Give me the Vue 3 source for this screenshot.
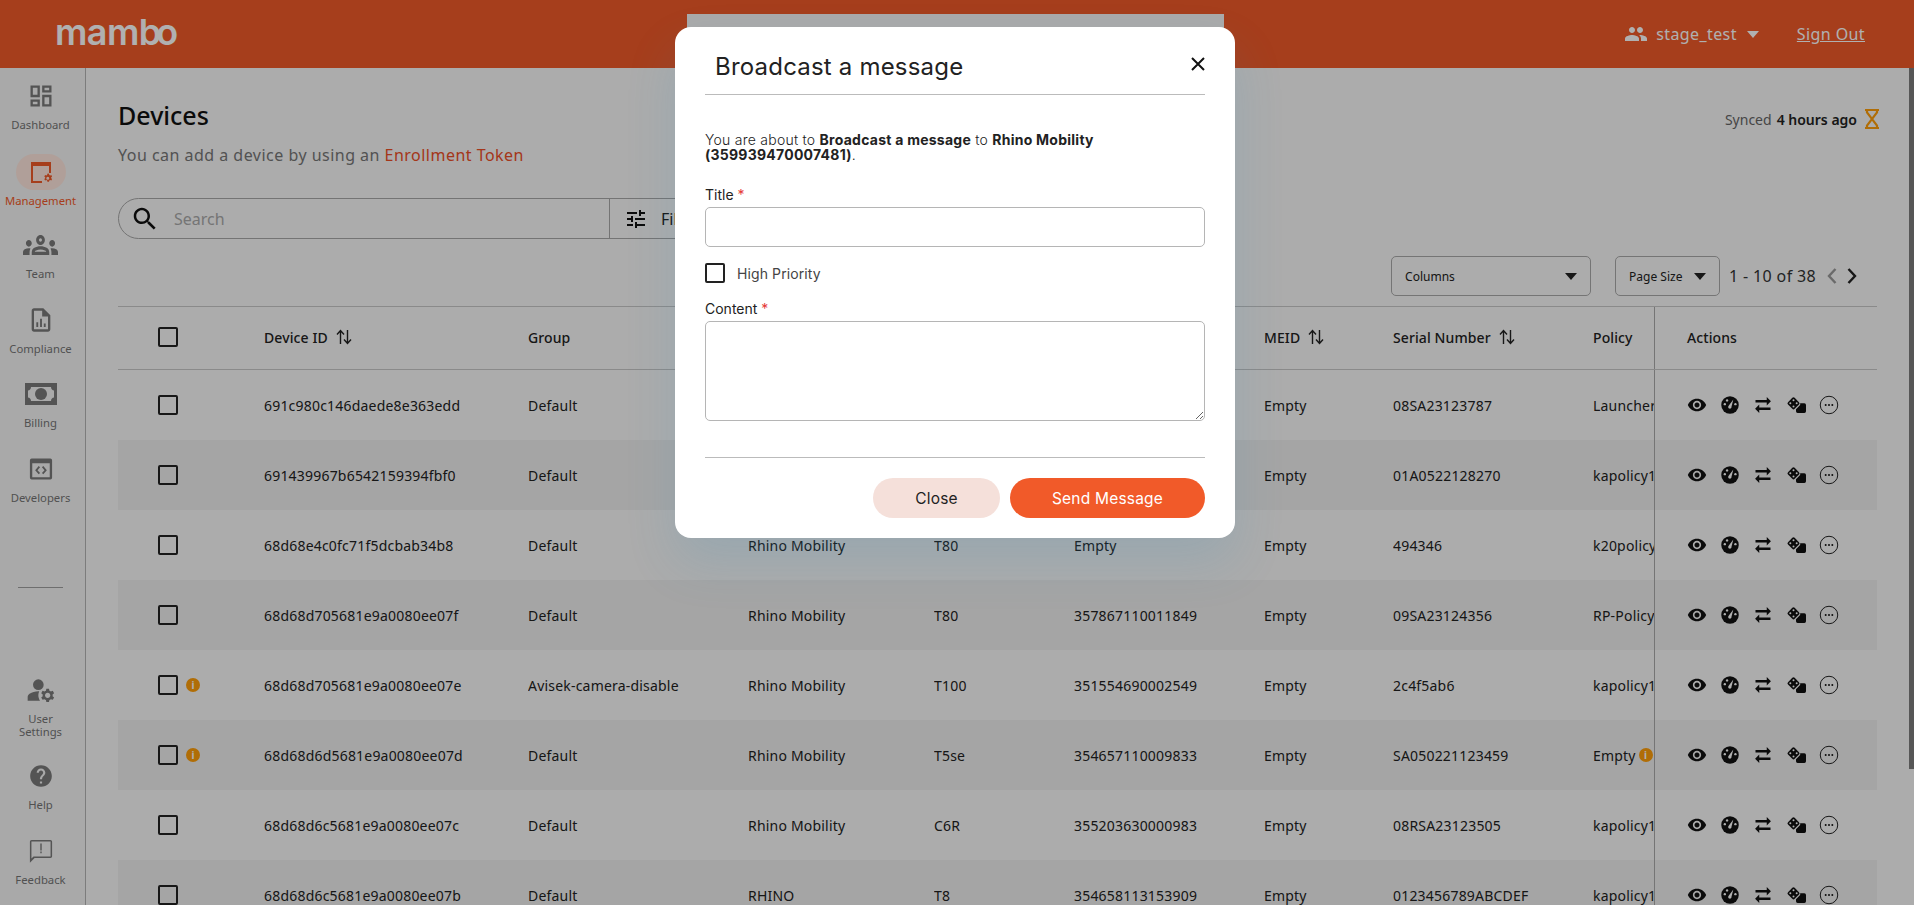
<template>
  <div class="page">
    <header class="topbar">
      <div class="logo">mam<span class="logo-b">b</span>o</div>
      <div class="user">
        <svg class="user-icon" viewBox="0 0 24 24"><path d="M16 11c1.66 0 2.99-1.34 2.99-3S17.66 5 16 5c-1.66 0-3 1.34-3 3s1.34 3 3 3zm-8 0c1.66 0 2.99-1.34 2.99-3S9.66 5 8 5C6.34 5 5 6.34 5 8s1.34 3 3 3zm0 2c-2.33 0-7 1.17-7 3.5V19h14v-2.5c0-2.33-4.67-3.5-7-3.5zm8 0c-.29 0-.62.02-.97.05 1.16.84 1.97 1.97 1.97 3.45V19h6v-2.5c0-2.33-4.67-3.5-7-3.5z"/></svg>
        <span>stage_test</span>
        <i class="caret white"></i>
      </div>
      <a class="signout">Sign Out</a>
    </header>

    <div class="strip"></div>

    <div class="body">
      <aside class="sidebar">
        <div class="nav-group">
          <div class="nav-item">
            <svg class="nav-icon" width="28" height="28" viewBox="0 0 24 24"><path d="M19 5v2h-4V5h4M9 5v6H5V5h4m10 8v6h-4v-6h4M9 17v2H5v-2h4M21 3h-8v6h8V3zM11 3H3v10h8V3zm10 8h-8v10h8V11zm-10 4H3v6h8v-6z"/></svg>
            <span>Dashboard</span>
          </div>
          <div class="nav-item active">
            <div class="pill">
              <svg width="26" height="24" viewBox="0 0 26 24"><path d="M3 2h20v11h-2V6H5v15h9v2H3z"/><path d="M20 13.500l1 .2.3 1.200.9.5 1.100-.4.8 1.400-.9.8v1l.9.8-.8 1.400-1.100-.4-.9.5-.3 1.200h-1.600l-.3-1.200-.9-.5-1.100.4-.8-1.400.9-.8v-1l-.9-.8.8-1.400 1.100.4.9-.5.3-1.200zm-.2 3.300a1.500 1.500 0 1 0 0 3 1.500 1.500 0 0 0 0-3z" fill-rule="evenodd"/></svg>
            </div>
            <span>Management</span>
          </div>
          <div class="nav-item">
            <svg class="nav-icon" width="35" height="28" viewBox="0 3.600 24 16.800" preserveAspectRatio="none"><path d="M4 13c1.100 0 2-.9 2-2s-.9-2-2-2-2 .9-2 2 .9 2 2 2zm1.130 1.100c-.37-.06-.74-.1-1.130-.1-.99 0-1.930.21-2.780.58C.48 14.900 0 15.620 0 16.430V18h4.500v-1.610c0-.83.23-1.610.63-2.290zM20 13c1.100 0 2-.9 2-2s-.9-2-2-2-2 .9-2 2 .9 2 2 2zm4 3.430c0-.81-.48-1.530-1.220-1.850-.85-.37-1.790-.58-2.780-.58-.39 0-.76.04-1.130.1.4.68.63 1.460.63 2.290V18H24v-1.570zm-7.760-2.780c-1.170-.52-2.610-.9-4.240-.9-1.630 0-3.070.39-4.240.9C6.680 14.130 6 15.210 6 16.390V18h12v-1.610c0-1.180-.68-2.260-1.760-2.740zM8.070 16c.09-.23.13-.39.91-.69.97-.38 1.990-.56 3.020-.56s2.050.18 3.020.56c.77.3.81.46.91.69H8.070zM12 8c.55 0 1 .45 1 1s-.45 1-1 1-1-.45-1-1 .45-1 1-1m0-2c-1.660 0-3 1.340-3 3s1.340 3 3 3 3-1.340 3-3-1.340-3-3-3z"/></svg>
            <span>Team</span>
          </div>
          <div class="nav-item">
            <svg class="nav-icon" width="28" height="28" viewBox="0 0 24 24"><path d="M14 2H6c-1.100 0-2 .9-2 2v16c0 1.100.9 2 2 2h12c1.100 0 2-.9 2-2V8l-6-6zm4 18H6V4h7v5h5v11z"/><path d="M8 14h1.600v4H8zM11.200 11h1.600v7h-1.600zM14.400 15h1.600v3h-1.600z"/></svg>
            <span>Compliance</span>
          </div>
          <div class="nav-item">
            <svg class="nav-icon" width="32" height="28" viewBox="0 0 32 28"><path fill-rule="evenodd" d="M0 3h32v22H0zM6 7c0 2-1.500 3.500-3 3.500v7C4.500 17.500 6 19 6 21h20c0-2 1.500-3.500 3-3.500v-7C27.500 10.500 26 9 26 7z"/><circle cx="16" cy="14" r="6"/></svg>
            <span>Billing</span>
          </div>
          <div class="nav-item">
            <svg class="nav-icon" width="28" height="28" viewBox="0 0 24 24"><path d="M4 3h16a1.500 1.500 0 0 1 1.500 1.500v15A1.500 1.500 0 0 1 20 21H4a1.500 1.500 0 0 1-1.500-1.500v-15A1.500 1.500 0 0 1 4 3zm.5 4v12h15V7z" fill-rule="evenodd"/><path d="M10 9.500L7 13l3 3.500 1.200-1L9 13l2.200-2.500zM14 9.500l3 3.500-3 3.500-1.200-1L15 13l-2.200-2.500z"/></svg>
            <span>Developers</span>
          </div>
        </div>
        <div class="nav-divider"></div>
        <div class="nav-group bottom">
          <div class="nav-item tall">
            <svg class="nav-icon" width="32" height="32" viewBox="0 0 24 24"><circle cx="10" cy="8" r="4"/><path d="M10.670 13.020C10.450 13.010 10.230 13 10 13c-2.420 0-4.680.67-6.610 1.820C2.510 15.340 2 16.320 2 17.350V20h9.260c-.79-1.130-1.260-2.510-1.260-4 0-1.070.25-2.070.67-2.980z"/><path d="M20.750 16c0-.22-.03-.42-.06-.63l1.140-1.010-1-1.730-1.450.49c-.32-.27-.68-.48-1.080-.63L18 11h-2l-.3 1.490c-.4.15-.76.36-1.080.63l-1.450-.49-1 1.730 1.140 1.010c-.03.21-.06.41-.06.63s.03.42.06.63l-1.140 1.010 1 1.730 1.450-.49c.32.27.68.48 1.080.63L16 21h2l.3-1.490c.4-.15.76-.36 1.080-.63l1.450.49 1-1.730-1.140-1.010c.03-.21.06-.41.06-.63zM17 18c-1.100 0-2-.9-2-2s.9-2 2-2 2 .9 2 2-.9 2-2 2z"/></svg>
            <span>User<br>Settings</span>
          </div>
          <div class="nav-item">
            <svg class="nav-icon" width="26" height="28" viewBox="0 0 24 24"><path d="M12 2C6.480 2 2 6.480 2 12s4.480 10 10 10 10-4.480 10-10S17.520 2 12 2zm1 17h-2v-2h2v2zm2.070-7.750l-.9.92C13.450 12.900 13 13.500 13 15h-2v-.5c0-1.100.45-2.100 1.170-2.830l1.240-1.260c.37-.36.59-.86.59-1.410 0-1.100-.9-2-2-2s-2 .9-2 2H8c0-2.210 1.790-4 4-4s4 1.790 4 4c0 .88-.36 1.680-.93 2.250z"/></svg>
            <span>Help</span>
          </div>
          <div class="nav-item">
            <svg class="nav-icon" width="28" height="28" viewBox="0 0 24 24"><path d="M20 2.500H4c-.9 0-1.500.6-1.500 1.500L2.500 22l4-4H20c.9 0 1.500-.6 1.500-1.500V4c0-.9-.6-1.500-1.500-1.500zm.2 14.200H5.600L3.800 18.500V3.800h16.400z"/><path d="M11.400 12.500h1.200v1.500h-1.200zM11.400 5.500h1.200v6h-1.200z"/></svg>
            <span>Feedback</span>
          </div>
        </div>
      </aside>

      <main class="main">
        <div class="title-row">
          <div>
            <h1>Devices</h1>
            <p class="sub">You can add a device by using an <a>Enrollment Token</a></p>
          </div>
          <div class="synced">
            Synced <b>4 hours ago</b>
            <svg width="16" height="20" viewBox="0 0 16 20"><path d="M1 1h14M1 19h14M3 1v2.500L13 16.500V19M13 1v2.500L3 16.500V19" fill="none" stroke="#ff9f0a" stroke-width="2.200"/></svg>
          </div>
        </div>

        <div class="search">
          <div class="search-left">
            <svg width="30" height="30" viewBox="0 0 24 24"><path d="M15.500 14h-.79l-.28-.27C15.410 12.590 16 11.110 16 9.500 16 5.910 13.090 3 9.500 3S3 5.910 3 9.500 5.910 16 9.500 16c1.610 0 3.090-.59 4.230-1.570l.27.28v.79l5 4.990L20.490 19l-4.990-5zm-6 0C7.010 14 5 11.990 5 9.500S7.010 5 9.500 5 14 7.010 14 9.500 11.990 14 9.500 14z"/></svg>
            <span>Search</span>
          </div>
          <div class="search-right">
            <svg width="24" height="24" viewBox="0 0 24 24"><path d="M3 17v2h6v-2H3zM3 5v2h10V5H3zm10 16v-2h8v-2h-8v-2h-2v6h2zM7 9v2H3v2h4v2h2V9H7zm14 4v-2H11v2h10zm-6-4h2V7h4V5h-4V3h-2v6z"/></svg>
            <span>Filters</span>
          </div>
        </div>

        <div class="toolbar">
          <div class="select wide"><span>Columns</span><i class="caret"></i></div>
          <div class="select narrow"><span>Page Size</span><i class="caret"></i></div>
          <span class="count">1 - 10 of 38</span>
          <svg class="chev" width="10" height="18" viewBox="0 0 10 18"><path d="M8.500 2L2 9l6.500 7" fill="none" stroke="#9a9a9a" stroke-width="2.400"/></svg>
          <svg class="chev next" width="10" height="18" viewBox="0 0 10 18"><path d="M1.500 2L8 9l-6.500 7" fill="none" stroke="#222" stroke-width="2.400"/></svg>
        </div>

        <div class="table">
          <div class="row head">
            <div class="cell"><i class="check"></i></div>
            <div class="cell">Device ID <svg class="sort" width="18" height="18" viewBox="0 0 18 18"><path d="M5.500 16V3M2 6.500L5.500 2.500 9 6.500M12.500 2v13M9 11.500l3.500 4 3.500-4" fill="none" stroke="#222" stroke-width="1.400"/></svg></div>
            <div class="cell">Group</div>
            <div class="cell">Manufacturer</div>
            <div class="cell">Model</div>
            <div class="cell">IMEI</div>
            <div class="cell">MEID <svg class="sort" width="18" height="18" viewBox="0 0 18 18"><path d="M5.500 16V3M2 6.500L5.500 2.500 9 6.500M12.500 2v13M9 11.500l3.500 4 3.500-4" fill="none" stroke="#222" stroke-width="1.400"/></svg></div>
            <div class="cell">Serial Number <svg class="sort" width="18" height="18" viewBox="0 0 18 18"><path d="M5.500 16V3M2 6.500L5.500 2.500 9 6.500M12.500 2v13M9 11.500l3.500 4 3.500-4" fill="none" stroke="#222" stroke-width="1.400"/></svg></div>
            <div class="cell">Policy</div>
            <div class="cell actions">Actions</div>
          </div>
          <div v-for="d in devices" :key="d.id" class="row">
            <div class="cell"><i class="check"></i><i v-if="d.warn" class="info">i</i></div>
            <div class="cell">{{ d.id }}</div>
            <div class="cell">{{ d.group }}</div>
            <div class="cell">{{ d.maker }}</div>
            <div class="cell">{{ d.model }}</div>
            <div class="cell">{{ d.imei }}</div>
            <div class="cell">Empty</div>
            <div class="cell">{{ d.serial }}</div>
            <div class="cell clip">{{ d.policy }}<i v-if="d.policyWarn" class="info policy-info">i</i></div>
            <div class="cell actions">
              <svg width="20" height="20" viewBox="0 0 24 24"><path d="M12 4.500C7 4.500 2.730 7.610 1 12c1.730 4.390 6 7.500 11 7.500s9.270-3.110 11-7.500c-1.730-4.390-6-7.500-11-7.500zM12 17c-2.760 0-5-2.240-5-5s2.240-5 5-5 5 2.240 5 5-2.240 5-5 5zm0-8c-1.660 0-3 1.340-3 3s1.340 3 3 3 3-1.340 3-3-1.340-3-3-3z"/></svg>
              <svg width="20" height="20" viewBox="0 0 24 24"><circle cx="12" cy="12" r="10.500"/><path d="M16 5.500l-2.200 8.500a2 2 0 1 1-3.400-1z" fill="#fff"/><circle cx="5.800" cy="11" r="1.400" fill="#fff"/><circle cx="8.500" cy="6.500" r="1.400" fill="#fff"/><circle cx="18.500" cy="11" r="1.400" fill="#fff"/></svg>
              <svg width="20" height="20" viewBox="0 0 24 24"><path d="M16.500 2.500V6H3v3h13.500v3.500l5-5zM7.500 11.500l-5 5 5 5V18H21v-3H7.500z"/></svg>
              <svg width="20" height="20" viewBox="0 0 24 24"><rect x="3.350" y="4.350" width="11.300" height="11.300" rx="2" transform="rotate(45 9 10)"/><circle cx="9" cy="6.200" r="1.200" fill="#fff"/><circle cx="5.200" cy="10" r="1.200" fill="#fff"/><circle cx="12.800" cy="10" r="1.200" fill="#fff"/><circle cx="9" cy="13.800" r="1.200" fill="#fff"/><path d="M17 10h5a2 2 0 0 1 2 2v7.500a2 2 0 0 1-2 2h-8a2 2 0 0 1-2-2V17l5-5z"/></svg>
              <svg width="20" height="20" viewBox="0 0 24 24"><circle cx="12" cy="12" r="10.500" fill="none" stroke="#222" stroke-width="1.200"/><circle cx="8" cy="12" r="1.200"/><circle cx="12" cy="12" r="1.200"/><circle cx="16" cy="12" r="1.200"/></svg>
            </div>
          </div>
        </div>
      </main>
    </div>

    <div class="thumb"></div>

    <div class="overlay">
      <div class="modal">
        <div class="modal-head">
          <h2>Broadcast a message</h2>
          <svg class="close-x" width="16" height="16" viewBox="0 0 16 16"><path d="M2 2l12 12M14 2L2 14" fill="none" stroke="#111" stroke-width="2"/></svg>
        </div>
        <p class="lead">You are about to <b>Broadcast a message</b> to <b>Rhino Mobility (359939470007481)</b>.</p>
        <label class="label">Title <em>*</em></label>
        <input class="input" type="text">
        <div class="priority"><i class="check small"></i><span>High Priority</span></div>
        <label class="label">Content <em>*</em></label>
        <textarea class="textarea"></textarea>
        <div class="modal-foot">
          <button class="btn light">Close</button>
          <button class="btn primary">Send Message</button>
        </div>
      </div>
    </div>
  </div>
</template>

<script setup>
const devices = [
  { id: '691c980c146daede8e363edd', group: 'Default', maker: 'Rhino Mobility', model: 'T80', imei: '359939470007481', serial: '08SA23123787', policy: 'Launcher policy' },
  { id: '691439967b6542159394fbf0', group: 'Default', maker: 'Rhino Mobility', model: 'T80', imei: '357867110011850', serial: '01A0522128270', policy: 'kapolicy1' },
  { id: '68d68e4c0fc71f5dcbab34b8', group: 'Default', maker: 'Rhino Mobility', model: 'T80', imei: 'Empty', serial: '494346', policy: 'k20policy' },
  { id: '68d68d705681e9a0080ee07f', group: 'Default', maker: 'Rhino Mobility', model: 'T80', imei: '357867110011849', serial: '09SA23124356', policy: 'RP-Policy' },
  { id: '68d68d705681e9a0080ee07e', group: 'Avisek-camera-disable', maker: 'Rhino Mobility', model: 'T100', imei: '351554690002549', serial: '2c4f5ab6', policy: 'kapolicy1', warn: true },
  { id: '68d68d6d5681e9a0080ee07d', group: 'Default', maker: 'Rhino Mobility', model: 'T5se', imei: '354657110009833', serial: 'SA050221123459', policy: 'Empty', warn: true, policyWarn: true },
  { id: '68d68d6c5681e9a0080ee07c', group: 'Default', maker: 'Rhino Mobility', model: 'C6R', imei: '355203630000983', serial: '08RSA23123505', policy: 'kapolicy1' },
  { id: '68d68d6c5681e9a0080ee07b', group: 'Default', maker: 'RHINO', model: 'T8', imei: '354658113153909', serial: '0123456789ABCDEF', policy: 'kapolicy1' },
]
</script>

<style>
html, body { margin: 0; height: 100%; overflow: hidden; background: #fff; }
</style>

<style scoped>
.page { position: relative; width: 1914px; height: 905px; overflow: hidden; font-family: "Noto Sans", sans-serif; color: #222; background: #f9f9f9; }
.topbar { height: 68px; background: #f15a29; display: flex; align-items: center; color: #fff; padding: 0 49px 0 55px; box-sizing: border-box; }
.logo { font-family: Inter, sans-serif; font-size: 36px; font-weight: 600; letter-spacing: -.6px; margin-right: auto; line-height: 1; margin-top: -4px; }
.logo-b { letter-spacing: -5px; }
.user { display: flex; align-items: center; font-size: 16px; letter-spacing: .4px; gap: 8px; margin-right: 38px; }
.user-icon { width: 24px; height: 24px; fill: #fff; }
.signout { font-size: 16px; letter-spacing: .4px; text-decoration: underline; }
.caret { display: inline-block; width: 0; height: 0; border-left: 6px solid transparent; border-right: 6px solid transparent; border-top: 7px solid #222; }
.caret.white { border-top-color: #fff; margin-left: 2px; }
.strip { position: absolute; left: 687px; top: 14px; width: 537px; height: 40px; background: #f6f6f6; }

.body { display: flex; height: 837px; }
.sidebar { width: 86px; flex: none; box-sizing: border-box; border-right: 1px solid #b4b4b4; background: #f5f5f5; display: flex; flex-direction: column; padding-top: 11px; color: #757575; }
.nav-group { width: 81px; }
.nav-item { height: 74.500px; display: flex; flex-direction: column; align-items: center; font-size: 11.300px; line-height: 13px; text-align: center; }
.nav-item.tall { height: 88px; }
.tall .nav-icon { margin-bottom: 6px; }
.nav-icon { fill: #7a7a7a; margin-top: 3px; margin-bottom: 8px; }
.nav-item.active { color: #f15a29; }
.pill { width: 50px; height: 36px; border-radius: 18px; background: #ffe7de; display: flex; align-items: center; justify-content: center; margin-bottom: 4px; flex: none; }
.pill svg { fill: #f15a29; }
.nav-divider { width: 45px; height: 1px; background: #a0a0a0; margin: 61px 0 0 18px; flex: none; }
.nav-group.bottom { margin-top: 83px; }

.main { flex: 1; min-width: 0; padding: 0 37px 0 32px; }
.title-row { display: flex; justify-content: space-between; align-items: flex-start; height: 130px; }
h1 { margin: 32px 0 0; font-size: 25px; line-height: 30px; font-weight: 500; color: #111; }
.sub { margin: 14px 0 0; font-size: 16px; line-height: 22px; color: #777; letter-spacing: .48px; }
.sub a { color: #ee4f27; }
.synced { margin-top: 41px; display: flex; align-items: center; gap: 5px; font-size: 14px; color: #666; }
.synced b { font-weight: 600; color: #222; }
.synced svg { margin: 0 -3px 0 2px; }

.search { width: 900px; height: 41px; box-sizing: border-box; border: 1px solid #a8a8a8; border-radius: 21px 0 0 21px; display: flex; }
.search-left { width: 491px; display: flex; align-items: center; border-right: 1px solid #a8a8a8; padding-left: 11px; gap: 14px; font-size: 16px; color: #aaa; box-sizing: border-box; }
.search-left svg { fill: #111; }
.search-right { display: flex; align-items: center; padding-left: 14px; gap: 13px; font-size: 16px; }
.search-right svg { fill: #111; }

.toolbar { display: flex; align-items: center; justify-content: flex-end; margin-top: 17px; padding-right: 20px; height: 40px; }
.select { height: 40px; box-sizing: border-box; border: 1px solid #aaa; border-radius: 5px; display: flex; align-items: center; justify-content: space-between; font-size: 12px; }
.select.wide { width: 200px; padding: 0 13px; margin-right: 24px; }
.select.narrow { width: 105px; padding: 0 13px; margin-right: 9px; }
.count { font-size: 16px; letter-spacing: .35px; margin-right: 11px; color: #333; }
.chev.next { margin-left: 10px; }

.table { margin-top: 10px; border-top: 1px solid #c8c8c8; }
.row { display: grid; grid-template-columns: 146px 264px 220px 186px 140px 190px 129px 200px 61px 223px; height: 70px; font-size: 14px; letter-spacing: .2px; }
.row:nth-child(odd) { background: #f0f0f0; }
.row.head { height: 63px; box-sizing: border-box; font-weight: 500; letter-spacing: .1px; background: transparent; border-bottom: 1px solid #c8c8c8; }
.row.head .cell { padding-bottom: 2px; box-sizing: border-box; }
.cell { display: flex; align-items: center; white-space: nowrap; overflow: hidden; }
.cell:first-child { padding-left: 40px; }
.clip { overflow: hidden; }
.check { display: block; width: 20px; height: 20px; box-sizing: border-box; border: 2px solid #222; border-radius: 2px; flex: none; }
.info { width: 14px; height: 14px; border-radius: 50%; background: #ff9f0a; color: #fff; font-style: normal; font-weight: 700; font-size: 10px; line-height: 14px; text-align: center; margin-left: 8px; flex: none; }
.policy-info { margin-left: 3px; }
.sort { margin-left: 7px; }
.actions { border-left: 1px solid #aaa; padding-left: 32px; gap: 13px; overflow: visible; }
.actions svg { fill: #111; flex: none; }
.thumb { position: absolute; right: 0; top: 68px; width: 5px; height: 701px; background: #7d7d7d; }

.overlay { position: absolute; inset: 0; background: rgba(0, 0, 0, .31); display: flex; justify-content: center; align-items: flex-start; }
.modal { width: 560px; height: 511px; margin: 27px 4px 0 0; box-sizing: border-box; padding: 0 30px; background: #fff; border-radius: 16px; box-shadow: 0 24px 50px rgba(50, 140, 190, .16); font-family: Inter, sans-serif; color: #222; }
.modal-head { height: 68px; box-sizing: border-box; border-bottom: 1px solid #bbb; position: relative; padding-left: 10px; }
.modal-head h2 { margin: 0; padding-top: 22px; font-size: 24px; line-height: 36px; letter-spacing: .2px; font-weight: 400; }
.close-x { position: absolute; right: -1px; top: 29px; }
.lead { margin: 37px 0 0; font-size: 14px; line-height: 15px; letter-spacing: .25px; font-weight: 300; color: #222; }
.lead b { font-weight: 700; }
.label { display: block; margin-top: 25px; font-size: 14px; line-height: 16px; }
.label em { color: #e53935; font-style: normal; }
.input { display: block; width: 100%; height: 40px; box-sizing: border-box; margin-top: 4px; border: 1px solid #b5b5b5; border-radius: 5px; outline: none; }
.priority { display: flex; align-items: center; gap: 12px; margin-top: 16px; font-size: 14px; letter-spacing: .1px; color: #444; }
.priority + .label { margin-top: 18px; }
.textarea { display: block; width: 100%; height: 100px; box-sizing: border-box; margin-top: 4px; border: 1px solid #b5b5b5; border-radius: 5px; outline: none; }
.modal-foot { margin-top: 36px; padding-top: 20px; border-top: 1px solid #bbb; display: flex; justify-content: flex-end; gap: 10px; }
.btn { height: 40px; border: none; border-radius: 20px; font-family: Inter, sans-serif; font-size: 15.500px; letter-spacing: .2px; }
.btn.light { width: 127px; background: #f5e0da; color: #222; }
.btn.primary { width: 195px; background: #f15a29; color: #fff; }
</style>
